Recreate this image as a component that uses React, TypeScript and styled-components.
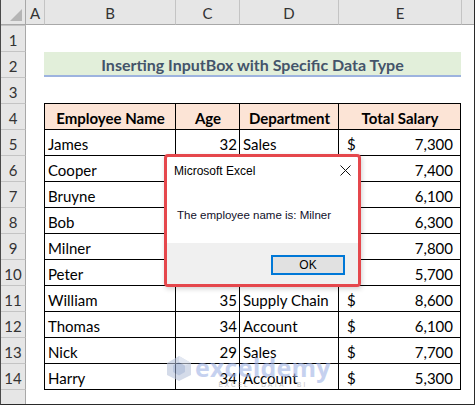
import React from "react";
import styled, { createGlobalStyle, css } from "styled-components";

const Global = createGlobalStyle`
  html, body { margin: 0; padding: 0; background: #ffffff; }
  * { box-sizing: border-box; }
`;

const Sheet = styled.div`
  position: relative;
  width: 475px;
  height: 405px;
  overflow: hidden;
  background: #ffffff;
  border-left: 1px solid #4a4a4a;
  border-right: 1px solid #2a2a2a;
  border-bottom: 1px solid #2a2a2a;
  display: grid;
  grid-template-columns: 25px 18px 131px 64px 99px 123px 1fr;
  grid-template-rows: 25px repeat(14, 26px) 1fr;
  font-family: Lato, "Liberation Sans", sans-serif;
  font-size: 15px;
  color: #000;
`;

const Corner = styled.div`
  background: #e6e6e6;
  border-right: 1px solid #a8a8a8;
  border-bottom: 1px solid #a8a8a8;
  display: flex;
  align-items: flex-end;
  justify-content: flex-end;
  padding: 0 3px 3px 0;
`;

const CornerTriangle = styled.div`
  width: 0;
  height: 0;
  border-left: 12px solid transparent;
  border-bottom: 12px solid #b5b5b5;
`;

const ColHead = styled.div<{ $sep?: boolean }>`
  background: #e6e6e6;
  border-bottom: 1px solid #a8a8a8;
  ${(p) => p.$sep && css`border-left: 1px solid #c4c4c4;`}
  display: flex;
  align-items: center;
  justify-content: center;
  color: #333;
  font-size: 15px;
  padding-top: 1px;
`;

const RowHead = styled.div`
  background: #e6e6e6;
  border-right: 1px solid #a8a8a8;
  border-top: 1px solid #c4c4c4;
  display: flex;
  align-items: center;
  justify-content: center;
  color: #333;
  font-size: 15px;
  padding-top: 3px;
`;

const Blank = styled.div<{ $span?: number }>`
  ${(p) => p.$span && css`grid-column: span ${p.$span};`}
`;

const Title = styled.div`
  grid-column: span 4;
  background: #e2efda;
  border-bottom: 2px solid #9db3df;
  margin-top: 1px;
  display: flex;
  align-items: center;
  justify-content: center;
  color: #44546a;
  font-weight: 700;
  font-size: 16px;
  padding-top: 2px;
`;

const Cell = styled.div<{
  $align?: "left" | "right" | "center";
  $head?: boolean;
  $last?: boolean;
}>`
  border-top: 1px solid #000;
  border-left: 1px solid #000;
  ${(p) => p.$last && css`border-right: 1px solid #000;`}
  background: ${(p) => (p.$head ? "#fce4d6" : "#ffffff")};
  font-weight: ${(p) => (p.$head ? 700 : 400)};
  display: flex;
  align-items: center;
  justify-content: ${(p) =>
    p.$align === "right" ? "flex-end" : p.$align === "center" ? "center" : "flex-start"};
  padding: 2px 2px 0 3px;
  white-space: nowrap;
  overflow: hidden;
`;

const Money = styled(Cell)`
  justify-content: space-between;
  padding: 2px 7px 0 8px;
`;

const TableBottom = styled.div`
  border-top: 1px solid #000;
`;

/* Dialog */
const Dialog = styled.div`
  position: absolute;
  left: 163px;
  top: 154px;
  width: 197px;
  height: 133px;
  border: 3px solid #e5474c;
  border-radius: 4px;
  background: #ffffff;
  display: flex;
  flex-direction: column;
  box-shadow: 1px 2px 5px rgba(0, 0, 0, 0.18);
  font-family: "Liberation Sans", Arial, sans-serif;
  font-size: 12px;
  color: #000;
  overflow: hidden;
`;

const DialogTitle = styled.div`
  height: 24px;
  display: flex;
  align-items: center;
  justify-content: space-between;
  padding: 3px 7px 0 7px;
`;

const Message = styled.div`
  margin-top: 26px;
  padding-left: 10px;
  color: #10102a;
  font-size: 11.5px;
  line-height: 16px;
`;

const Footer = styled.div`
  margin-top: auto;
  height: 41px;
  background: #f0f0f0;
  display: flex;
  justify-content: flex-end;
  align-items: flex-start;
  padding: 12px 13px 0 0;
`;

const OkButton = styled.div`
  width: 74px;
  height: 20px;
  border: 2px solid #0078d7;
  background: #e1e1e1;
  display: flex;
  align-items: center;
  justify-content: center;
  font-size: 12px;
`;

/* Watermark */
const Watermark = styled.div`
  position: absolute;
  left: 165px;
  top: 355px;
  display: flex;
  align-items: flex-start;
  gap: 3px;
  opacity: 0.6;
  pointer-events: none;
`;

const WmText = styled.div`
  display: flex;
  flex-direction: column;
  align-items: center;
`;

const WmBrand = styled.div`
  font-family: "Open Sans", "Liberation Sans", sans-serif;
  font-weight: 700;
  font-size: 25px;
  line-height: 24px;
  color: #9fb3e6;
  letter-spacing: 0.2px;
`;

const WmSub = styled.div`
  font-family: "Liberation Sans", sans-serif;
  font-size: 6.5px;
  letter-spacing: 2px;
  color: #9a9a9a;
  margin-top: 2px;
`;

type Row = { name: string; age: string; dept: string; salary: string; covered?: boolean };
const rows: Row[] = [
  { name: "James", age: "32", dept: "Sales", salary: "7,300" },
  { name: "Cooper", age: "", dept: "", salary: "7,400", covered: true },
  { name: "Bruyne", age: "", dept: "", salary: "6,100", covered: true },
  { name: "Bob", age: "", dept: "", salary: "6,300", covered: true },
  { name: "Milner", age: "", dept: "", salary: "7,800", covered: true },
  { name: "Peter", age: "", dept: "", salary: "5,700", covered: true },
  { name: "William", age: "35", dept: "Supply Chain", salary: "8,600" },
  { name: "Thomas", age: "34", dept: "Account", salary: "6,100" },
  { name: "Nick", age: "29", dept: "Sales", salary: "7,700" },
  { name: "Harry", age: "34", dept: "Account", salary: "5,300" },
];

export default function App() {
  return (
    <>
      <Global />
      <Sheet>
        <Corner>
          <CornerTriangle />
        </Corner>
        <ColHead>A</ColHead>
        <ColHead $sep>B</ColHead>
        <ColHead $sep>C</ColHead>
        <ColHead $sep>D</ColHead>
        <ColHead $sep>E</ColHead>
        <ColHead $sep />

        <RowHead>1</RowHead>
        <Blank $span={6} />

        <RowHead>2</RowHead>
        <Blank />
        <Title>Inserting InputBox with Specific Data Type</Title>
        <Blank />

        <RowHead>3</RowHead>
        <Blank $span={6} />

        <RowHead>4</RowHead>
        <Blank />
        <Cell $head $align="center">Employee Name</Cell>
        <Cell $head $align="center">Age</Cell>
        <Cell $head $align="center">Department</Cell>
        <Cell $head $align="center" $last>Total Salary</Cell>
        <Blank />

        {rows.map((r, i) => (
          <React.Fragment key={r.name}>
            <RowHead>{i + 5}</RowHead>
            <Blank />
            <Cell>{r.name}</Cell>
            <Cell $align="right">{r.age}</Cell>
            <Cell>{r.dept}</Cell>
            <Money $last>
              <span>{r.covered ? "" : "$"}</span>
              <span>{r.salary}</span>
            </Money>
            <Blank />
          </React.Fragment>
        ))}

        <RowHead />
        <Blank />
        <TableBottom />
        <TableBottom />
        <TableBottom />
        <TableBottom />
        <Blank />

        <Dialog>
          <DialogTitle>
            <span>Microsoft Excel</span>
            <svg width="11" height="11" viewBox="0 0 11 11">
              <path d="M0.5 0.5 L10.5 10.5 M10.5 0.5 L0.5 10.5" stroke="#111" strokeWidth="1" fill="none" />
            </svg>
          </DialogTitle>
          <Message>The employee name is: Milner</Message>
          <Footer>
            <OkButton>OK</OkButton>
          </Footer>
        </Dialog>

        <Watermark>
          <svg width="26" height="27" viewBox="0 0 26 27">
            <path d="M13 1 L25 8 L25 20 L13 26 L1 20 L1 8 Z" fill="#b9c4dc" />
            <path d="M13 7 L19 10.5 L19 17 L13 20.5 L7 17 L7 10.5 Z" fill="#8fa2c9" />
            <path d="M13 1 L25 8 L19 10.5 L13 7 Z" fill="#d2daea" />
          </svg>
          <WmText>
            <WmBrand>exceldemy</WmBrand>
            <WmSub>EXCEL · DATA · BI</WmSub>
          </WmText>
        </Watermark>
      </Sheet>
    </>
  );
}
